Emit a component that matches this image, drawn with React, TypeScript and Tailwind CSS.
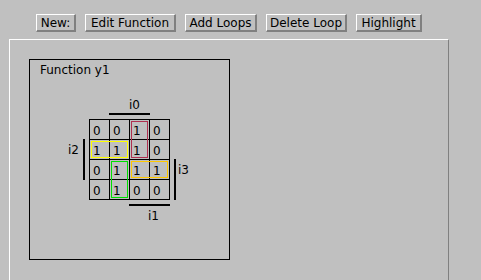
const buttons = [
  { label: 'New:', w: 'w-[40px]' },
  { label: 'Edit Function', w: 'w-[91px]' },
  { label: 'Add Loops', w: 'w-[72px]' },
  { label: 'Delete Loop', w: 'w-[81px]' },
  { label: 'Highlight', w: 'w-[66px]' },
]

const values = [
  [0, 0, 1, 0],
  [1, 1, 1, 0],
  [0, 1, 1, 1],
  [0, 1, 0, 0],
]

// loops drawn over the map, offsets from the map's inner corner
const loops = [
  { cls: 'left-[41px] top-[1px] w-[17px] h-[37px] border-[#b03050]' },
  { cls: 'left-[1px] top-[21px] w-[37px] h-[17px] border-[#ffff00]' },
  { cls: 'left-[21px] top-[41px] w-[17px] h-[37px] border-[#00e000]' },
  { cls: 'left-[41px] top-[41px] w-[37px] h-[17px] border-[#ffc800]' },
]

function KMap() {
  return (
    <div className="relative grid grid-cols-4 w-[81px] h-[81px] border-l border-t border-black">
      {values.flat().map((v, i) => (
        <div key={i} className="h-[20px] border-r border-b border-black pl-[3px] pt-[4px]">
          {v}
        </div>
      ))}
      {loops.map((l, i) => (
        <div key={i} className={`absolute border ${l.cls}`} />
      ))}
    </div>
  )
}

export default function App() {
  return (
    <div className="h-[280px] overflow-hidden bg-[#c0c0c0] text-black text-[12px] leading-[14px] font-['DejaVu_Sans',sans-serif]">
      {/* Toolbar */}
      <div className="flex gap-[9px] pl-[36px] pt-[14px]">
        {buttons.map((b) => (
          <button
            key={b.label}
            className={`${b.w} h-[18px] flex items-center justify-center whitespace-nowrap bg-[#c0c0c0] border-t border-l border-white border-r-2 border-b-2 border-r-[#808080] border-b-[#808080]`}
          >
            {b.label}
          </button>
        ))}
      </div>

      {/* Main panel */}
      <div className="ml-[9px] mt-[7px] w-[440px] h-[260px] border-t border-l border-white border-r border-r-[#808080] p-[19px]">
        <div className="w-[201px] h-[201px] border border-black">
          <div className="pl-[10px] pt-[3px] whitespace-nowrap">Function y1</div>

          {/* i0 */}
          <div className="mt-[21px] pl-[99px]">i0</div>
          <div className="mt-[1px] ml-[79px] w-[41px] h-[2px] bg-black" />

          {/* i2 | map | i3 */}
          <div className="flex items-start mt-[4px]">
            <div className="ml-[38px] w-[15px] mt-[24px]">i2</div>
            <div className="mt-[20px] w-[2px] h-[41px] bg-black" />
            <div className="ml-[4px]">
              <KMap />
            </div>
            <div className="ml-[4px] mt-[40px] w-[2px] h-[41px] bg-black" />
            <div className="ml-[2px] mt-[44px]">i3</div>
          </div>

          {/* i1 */}
          <div className="mt-[4px] ml-[99px] w-[41px] h-[2px] bg-black" />
          <div className="mt-[3px] pl-[118px]">i1</div>
        </div>
      </div>
    </div>
  )
}
